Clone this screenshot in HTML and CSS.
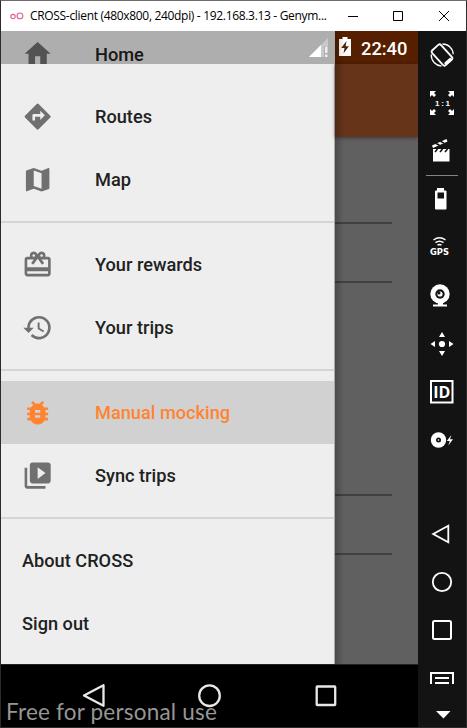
FILE: index.html
```html
<!DOCTYPE html>
<html lang="en">
<head>
<meta charset="utf-8">
<title>CROSS-client</title>
<link rel="stylesheet" href="styles.css">
</head>
<body>
<div class="window">
  <header class="titlebar">
    <svg class="logo" width="14" height="8" viewBox="0 0 14 8" fill="none" stroke="#e0608a" stroke-width="1.1"><circle cx="3" cy="4.6" r="2.2"/><circle cx="9.9" cy="3.9" r="2.9"/></svg>
    <span class="caption">CROSS-client (480x800, 240dpi) - 192.168.3.13 - Genym...</span>
    <svg class="controls" width="110" height="14" viewBox="0 0 110 14" fill="none" stroke="#000"><path d="M1 7.5h10M46.500 2.500h9v9h-9zM92 2l10 10M102 2l-10 10"/></svg>
  </header>
  <div class="body">
    <main class="phone">
      <div class="screen">
        <nav class="drawer">
          <div class="menu">
            <a class="item"><svg viewBox="0 0 24 24"><path d="M10 20v-6h4v6h5v-8h3L12 3 2 12h3v8z"/></svg><span>Home</span></a>
            <a class="item"><svg viewBox="0 0 24 24"><path d="M21.710 11.290l-9-9a1 1 0 0 0-1.410 0l-9 9a1 1 0 0 0 0 1.410l9 9a1 1 0 0 0 1.410 0l9-9a1 1 0 0 0 0-1.410zM14 14.500V12h-4v3H8v-4c0-.550.450-1 1-1h5V7.500l3.500 3.500-3.500 3.500z"/></svg><span>Routes</span></a>
            <a class="item"><svg viewBox="0 0 24 24"><path d="M20.500 3l-.160.030L15 5.100 9 3 3.360 4.900c-.210.070-.360.250-.360.480V20.500c0 .280.220.500.500.500l.160-.030L9 18.900l6 2.100 5.640-1.900c.210-.070.360-.250.360-.480V3.500c0-.280-.220-.500-.500-.500zM15 19l-6-2.110V5l6 2.110V19z"/></svg><span>Map</span></a>
            <div class="separator"></div>
            <a class="item"><svg viewBox="0 0 24 24"><path d="M20 6h-2.180c.110-.310.180-.650.180-1a3 3 0 0 0-5.500-1.650l-.500.670-.500-.680A3 3 0 0 0 6 5c0 .350.070.690.180 1H4c-1.110 0-1.990.890-1.990 2L2 19c0 1.110.890 2 2 2h16c1.110 0 2-.890 2-2V8c0-1.110-.890-2-2-2zm-5-2c.550 0 1 .450 1 1s-.450 1-1 1-1-.450-1-1 .450-1 1-1zM9 4c.550 0 1 .450 1 1s-.450 1-1 1-1-.450-1-1 .450-1 1-1zm11 15H4v-2h16v2zm0-5H4V8h5.080L7 10.830 8.620 12 11 8.760l1-1.360 1 1.360L15.380 12 17 10.830 14.920 8H20v6z"/></svg><span>Your rewards</span></a>
            <a class="item"><svg viewBox="0 0 24 24"><path d="M13 3a9 9 0 0 0-9 9H1l3.890 3.890.070.140L9 12H6a7 7 0 1 1 2.060 4.940l-1.420 1.420A9 9 0 1 0 13 3zm-1 5v5l4.280 2.540.720-1.210-3.500-2.080V8H12z"/></svg><span>Your trips</span></a>
            <div class="separator"></div>
            <a class="item active"><svg viewBox="0 0 24 24"><path d="M20 8h-2.810a5.980 5.980 0 0 0-1.820-1.960L17 4.410 15.590 3l-2.170 2.170a6 6 0 0 0-2.830 0L8.410 3 7 4.410l1.620 1.630C7.880 6.550 7.260 7.220 6.810 8H4v2h2.090c-.050.330-.090.660-.090 1v1H4v2h2v1c0 .340.040.670.090 1H4v2h2.810a5.990 5.990 0 0 0 10.380 0H20v-2h-2.090c.050-.330.090-.660.090-1v-1h2v-2h-2v-1c0-.340-.040-.670-.090-1H20V8zm-6 8h-4v-2h4v2zm0-4h-4v-2h4v2z"/></svg><span>Manual mocking</span></a>
            <a class="item"><svg viewBox="0 0 24 24"><path d="M4 6H2v14c0 1.100.900 2 2 2h14v-2H4V6zm16-4H8c-1.100 0-2 .900-2 2v12c0 1.100.900 2 2 2h12c1.100 0 2-.900 2-2V4c0-1.100-.900-2-2-2zm-8 12.500v-9l6 4.500-6 4.500z"/></svg><span>Sync trips</span></a>
            <div class="separator"></div>
            <a class="item"><span>About CROSS</span></a>
            <a class="item"><span>Sign out</span></a>
          </div>
          <div class="scrim">
            <svg width="21" height="20" viewBox="0 0 21 20"><path d="M19 0v8h-4v11H0z" fill="#c9c9c9"/><path d="M12 7v12H0z" fill="#fff"/><path d="M16 8.500h2.500v6.500H16zM16 16.500h2.500V19H16z" fill="#eee"/></svg>
          </div>
        </nav>
        <section class="page">
          <div class="status">
            <svg width="12" height="19" viewBox="0 0 12 19"><path d="M3.500 0h5v2H12v17H0V2h3.500z" fill="#fff"/><path d="M7.500 4L2.200 11h3.300l-1 5.500L9.900 9.200H6.600z" fill="#561f00"/></svg>
            <span>22:40</span>
          </div>
          <div class="appbar"></div>
          <div class="form">
            <div class="field first"></div>
            <div class="field second"></div>
            <div class="field third"></div>
            <div class="field second"></div>
          </div>
        </section>
      </div>
      <footer class="navbar">
        <svg class="keys" width="417" height="62" viewBox="0 0 417 62" fill="none" stroke="#e8e8e8" stroke-width="2.300"><path d="M102.500 20.300v20.500L83 30.500z" stroke-linejoin="round"/><circle cx="208.500" cy="30.700" r="10.300"/><rect x="315.700" y="21.500" width="18.500" height="18.500" rx=".5"/></svg>
        <div class="watermark">Free for personal use</div>
      </footer>
    </main>
    <aside class="tools">
      <svg viewBox="0 0 48 48" fill="none" stroke="#fff"><rect x="18" y="14" width="12" height="20" rx="2" stroke-width="1.800" transform="rotate(-42 24 24)"/><path d="M27 33.200l6.200-5.600" stroke-width="3"/><path d="M24.500 13c6 0 10.500 4.600 10.700 10.300M13.200 23.500C13.200 30 17.500 34.500 23.500 35.200" stroke-width="1.300"/></svg>
      <svg viewBox="0 0 48 48" fill="#fff"><path d="M12 12h6l-2 2 2 2-2 2-2-2-2 2zM36 12h-6l2 2-2 2 2 2 2-2 2 2zM12 36h6l-2-2 2-2-2-2-2 2-2-2zM36 36h-6l2-2-2-2 2-2 2 2 2-2z"/><text x="24.500" y="27" font-size="8" font-weight="bold" text-anchor="middle" textLength="15">1 : 1</text></svg>
      <svg viewBox="0 0 48 48" fill="#fff"><path d="M15 22h16.500v12.500H15zM14 18.500l14.500-6.500 1 2.500L15 21z"/><path d="M18 16.500l3.500 1.800M22.500 14.300l3.500 1.800M17 25l2.500-3M22 25l2.500-3M27 25l2.500-3" stroke="#131313" stroke-width="1.600"/></svg>
      <div class="rule"></div>
      <svg viewBox="0 0 48 48" fill="#fff"><path fill-rule="evenodd" d="M19 12h7v2.500h1.500q1 0 1 1V32.500q0 1-1 1H18q-1 0-1-1V15.500q0-1 1-1h1zM19.500 16.500v6h6.500v-6z"/></svg>
      <svg viewBox="0 0 48 48" fill="none" stroke="#fff" stroke-width="1.500"><path d="M15.500 16q6-4.500 12 0M17.500 18.700q4-3 8 0M19.500 21.200q2-1.500 4 0"/><text class="gps" x="21.500" y="31" text-anchor="middle" textLength="19" lengthAdjust="spacingAndGlyphs">GPS</text></svg>
      <svg viewBox="0 0 48 48"><path d="M20 30.500h5v2h4v2H15v-2h5z" fill="#fff"/><circle cx="22" cy="22" r="9.700" fill="#fff"/><circle cx="22" cy="22" r="4.700" fill="#131313"/><circle cx="22" cy="22" r="2.600" fill="#fff"/><circle cx="21" cy="21" r="1.500" fill="#131313"/></svg>
      <svg viewBox="0 0 48 48" fill="#fff"><circle cx="24" cy="24" r="3.100"/><path d="M24 12l3 5h-6zM24 36l3-5h-6zM12.500 24l4.500-3v6zM35.500 24L31 21v6z"/></svg>
      <svg viewBox="0 0 48 48" fill="#fff"><rect x="13" y="13" width="21.500" height="21.500" fill="none" stroke="#fff" stroke-width="2"/><text class="id" x="23.800" y="29.500" text-anchor="middle">ID</text></svg>
      <svg viewBox="0 0 48 48"><circle cx="20.500" cy="24" r="7.700" fill="#fff"/><circle cx="20.500" cy="24" r="2.500" fill="#131313"/><circle cx="20.500" cy="24" r=".8" fill="#fff"/><path d="M33.300 19l-4.500 6h3l-1.500 4.500 4.700-6.300h-3z" fill="#fff"/></svg>
      <div class="system">
        <svg viewBox="0 0 48 48" fill="none" stroke="#fff" stroke-width="1.800"><path d="M30.300 15.800v16.400L15.200 24z"/></svg>
        <svg viewBox="0 0 48 48" fill="none" stroke="#fff" stroke-width="1.800"><circle cx="24" cy="24" r="9.200"/></svg>
        <svg viewBox="0 0 48 48" fill="none" stroke="#fff" stroke-width="2"><rect x="15" y="15" width="18" height="18" rx="1.500"/></svg>
        <svg class="menu-key" viewBox="0 0 48 30" fill="none" stroke="#fff" stroke-width="2"><path d="M13 30V19h22v11M17 24h14M17 29h14"/></svg>
        <svg class="more" viewBox="0 0 48 42" fill="#fff"><path d="M18 27h14.500l-7 7.500z"/></svg>
      </div>
    </aside>
  </div>
</div>
</body>
</html>
```
FILE: styles.css
```css
* { box-sizing: border-box; }

body {
  margin: 0;
  font-family: Roboto, sans-serif;
}

.window {
  width: 467px;
  height: 728px;
  border: 1px solid #2b2b2b;
  border-top-color: #6e6c6d;
  background: #131313;
  overflow: hidden;
}

.titlebar {
  display: flex;
  align-items: center;
  height: 30px;
  padding-left: 9px;
  background: #fff;
}

.logo { flex: none; }

.caption {
  width: 297px;
  margin-left: 6px;
  font: 12px/16px "Open Sans", "Noto Sans", sans-serif;
  letter-spacing: -0.32px;
  white-space: nowrap;
  color: #000;
}

.controls {
  flex: none;
  margin-left: 20px;
}

.body { display: flex; }

.phone {
  width: 417px;
  height: 696px;
  background: #000;
}

.screen {
  display: grid;
  grid-template-columns: 334px 83px;
  height: 633px;
  overflow: hidden;
}

.drawer {
  position: relative;
  height: 633px;
  overflow: hidden;
  background: #eee;
  border-right: 1px solid #ababab;
}

.menu { margin-top: -8.3px; }

.item {
  display: flex;
  align-items: center;
  height: 62.7px;
  padding-left: 21px;
  font-size: 18.2px;
  font-weight: 500;
  color: #212121;
}

.item svg {
  width: 31.3px;
  height: 31.3px;
  margin-right: 41.7px;
  fill: #707070;
}

.item.active {
  background: #d1d1d1;
  color: #ff8432;
}

.item.active svg { fill: #ff8432; }

.separator {
  height: 22.6px;
  padding-top: 10.3px;
}

.separator::before {
  content: "";
  display: block;
  height: 2px;
  background: #d4d4d4;
}

.scrim {
  position: absolute;
  inset: 0 -1px auto 0;
  display: flex;
  justify-content: flex-end;
  height: 33px;
  padding: 7px 5px 0 0;
  background: rgba(0, 0, 0, 0.265);
}

.page {
  position: relative;
  background: #606060;
}

.page::before {
  content: "";
  position: absolute;
  inset: 0 auto 0 0;
  width: 9px;
  background: linear-gradient(90deg, rgba(0, 0, 0, 0.22), transparent);
}

.status {
  display: flex;
  gap: 10px;
  height: 33px;
  padding: 6px 0 0 4px;
  background: #561f00;
  color: #fff;
  font-size: 18.3px;
  font-weight: 500;
  line-height: 23px;
}

.appbar {
  height: 73px;
  background: #653419;
  box-shadow: 0 1px 4px rgba(0, 0, 0, 0.4);
}

.field {
  width: 57px;
  border-bottom: 2px solid #404040;
}

.first { height: 87px; }
.second { height: 59px; }
.third { height: 213px; }

.navbar {
  position: relative;
  height: 63px;
  border-top: 1px solid #242424;
}

.keys { display: block; }

.watermark {
  position: absolute;
  left: 5px;
  bottom: 2px;
  font: 22.5px/27px Lato, sans-serif;
  letter-spacing: 0.2px;
  color: #969696;
  white-space: nowrap;
}

.tools {
  width: 48px;
  height: 696px;
  background: #131313;
}

.tools svg {
  display: block;
  width: 48px;
  height: 48px;
}

.tools text { font-family: "Liberation Sans", sans-serif; }

.rule {
  height: 1px;
  margin: 0 8px;
  background: #858585;
}

.tools .gps {
  font: 700 8.6px "DejaVu Sans", sans-serif;
  fill: #fff;
  stroke: none;
}

.tools .id {
  font: 700 16px "Open Sans", sans-serif;
}

.system { padding-top: 46px; }

.tools .menu-key { height: 30px; }

.tools .more { height: 42px; }
```
